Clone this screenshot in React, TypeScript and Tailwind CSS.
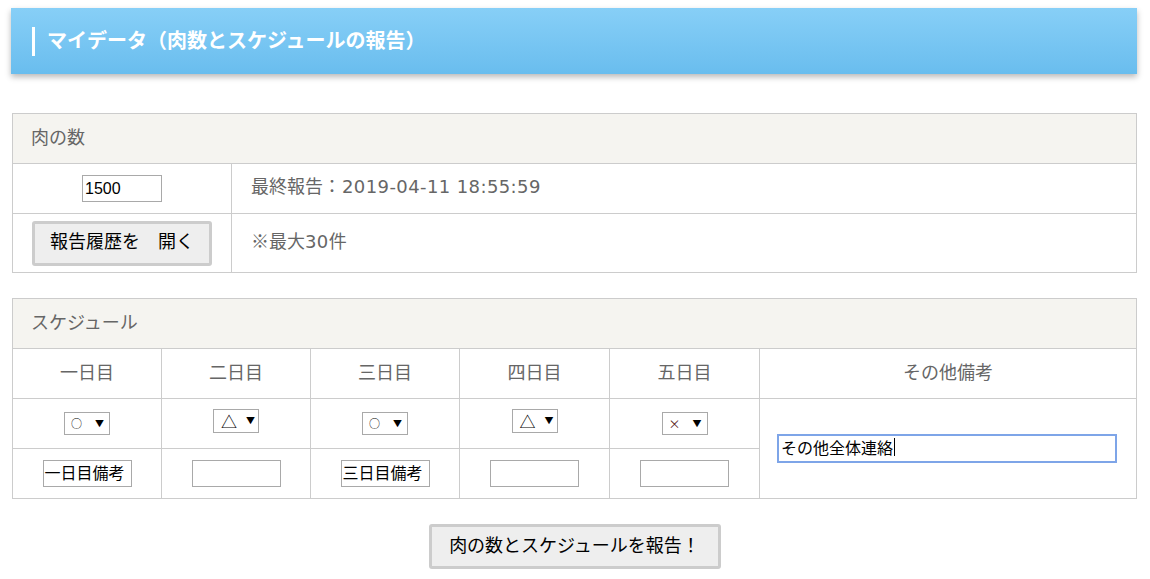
import React from "react";

const JP = { fontFamily: '"Noto Sans CJK JP", "Noto Sans", sans-serif' };
const NUM = { fontFamily: '"DejaVu Sans", "Noto Sans CJK JP", sans-serif' };

function FakeSelect({ sym, kind }: { sym: string; kind: "o" | "t" | "x" }) {
  if (kind === "t") {
    return (
      <div className="mb-[6px] flex h-[24px] w-[46px] items-end border border-[#a9a9a9] bg-white pb-[2px]">
        <span className="ml-[7px] text-[16px] leading-[18px] text-black">{sym}</span>
        <span className="mb-[5px] ml-[9px] text-[9px] leading-[9px] text-black">▼</span>
      </div>
    );
  }
  return (
    <div className="flex h-[23px] w-[46px] items-center border border-[#a9a9a9] bg-white">
      <span
        className={
          kind === "o"
            ? "ml-[6px] w-[10px] text-[11px] leading-[11px] text-black"
            : "ml-[6px] w-[10px] text-[12px] leading-[12px] text-[#5a1a1a]"
        }
      >
        {sym}
      </span>
      <span className="ml-[14px] text-[9px] leading-[9px] text-black">▼</span>
    </div>
  );
}

function SmallInput({ value }: { value?: string }) {
  return (
    <div className="flex h-[27px] w-[89px] items-center border border-[#a9a9a9] bg-white pb-[3px] pl-[1px] text-[16px] leading-[18px] text-black">
      {value ?? ""}
    </div>
  );
}

export default function App() {
  const days = ["一日目", "二日目", "三日目", "四日目", "五日目"];
  const sels: { sym: string; kind: "o" | "t" | "x" }[] = [
    { sym: "○", kind: "o" },
    { sym: "△", kind: "t" },
    { sym: "○", kind: "o" },
    { sym: "△", kind: "t" },
    { sym: "×", kind: "x" },
  ];
  const notes = ["一日目備考", "", "三日目備考", "", ""];
  return (
    <div className="min-h-screen bg-white pt-[8px] pb-[10px]" style={JP}>
      <header className="ml-[11px] flex h-[66px] w-[1126px] items-center bg-gradient-to-b from-[#87cff7] to-[#69bdee] pl-[21px] shadow-[0_3px_6px_rgba(0,0,0,0.28)]">
        <div className="mr-[12px] h-[29px] w-[3px] bg-white" />
        <h1 className="pb-[3px] text-[20px] font-bold leading-[26px] text-white">
          マイデータ（肉数とスケジュールの報告）
        </h1>
      </header>

      <div className="ml-[12px] w-[1125px]">
        {/* 肉の数 */}
        <div className="mt-[39px] grid grid-cols-[218px_1fr] grid-rows-[49px_49px_58px] gap-px bg-[#cccccc] p-px">
          <div className="col-span-2 flex items-center bg-[#f5f4f0] pb-[5px] pl-[18px] text-[18px] text-[#666666]">
            肉の数
          </div>
          <div className="flex items-center justify-center bg-white">
            <div
              className="flex h-[27px] w-[80px] items-center border border-[#a9a9a9] bg-white pl-[2px] text-[16px] text-black"
              style={{ fontFamily: '"Liberation Sans", sans-serif' }}
            >
              1500
            </div>
          </div>
          <div className="flex items-center bg-white pb-[5px] pl-[19px] text-[18px] text-[#666666]">
            <span>
              最終報告：
              <span style={NUM} className="ml-[1px] text-[18px] tracking-[0.4px]">
                2019-04-11 18:55:59
              </span>
            </span>
          </div>
          <div className="flex items-center justify-center bg-white">
            <div className="flex h-[45px] w-[180px] items-center justify-center rounded-[3px] border-[3px] border-[#cccccc] bg-[#eeeeee] pb-[5px] text-[18px] text-black">
              報告履歴を　開く
            </div>
          </div>
          <div className="flex items-center bg-white pb-[5px] pl-[19px] text-[18px] text-[#666666]">
            <span>
              ※最大
              <span style={NUM} className="text-[18px] tracking-[0.4px]">
                30
              </span>
              件
            </span>
          </div>
        </div>

        {/* スケジュール */}
        <div className="mt-[25px] grid grid-cols-[148px_148px_148px_149px_149px_1fr] grid-rows-[49px_49px_49px_49px] gap-px bg-[#cccccc] p-px">
          <div className="col-span-6 flex items-center bg-[#f5f4f0] pb-[5px] pl-[18px] text-[18px] text-[#666666]">
            スケジュール
          </div>
          {days.map((d) => (
            <div key={d} className="flex items-center justify-center bg-white pb-[5px] text-[18px] text-[#666666]">
              {d}
            </div>
          ))}
          <div className="flex items-center justify-center bg-white pb-[5px] text-[18px] text-[#666666]">
            その他備考
          </div>
          {sels.map((s, i) => (
            <div key={i} className="flex items-center justify-center bg-white">
              <FakeSelect sym={s.sym} kind={s.kind} />
            </div>
          ))}
          <div className="row-span-2 flex items-center bg-white pl-[17px] pr-[19px]">
            <div className="flex h-[29px] w-full items-center border-2 border-[#7ea5e8] bg-white pb-[3px] pl-[2px] text-[16px] leading-[18px] text-black">
              その他全体連絡
              <span className="ml-px h-[18px] w-px bg-black" />
            </div>
          </div>
          {notes.map((n, i) => (
            <div key={i} className="flex items-center justify-center bg-white">
              <SmallInput value={n} />
            </div>
          ))}
        </div>

        <div className="mt-[25px] flex justify-center">
          <div className="flex h-[45px] w-[292px] items-center justify-center rounded-[3px] border-[3px] border-[#cccccc] bg-[#eeeeee] pb-[5px] text-[18px] text-black">
            肉の数とスケジュールを報告！
          </div>
        </div>
      </div>
    </div>
  );
}
